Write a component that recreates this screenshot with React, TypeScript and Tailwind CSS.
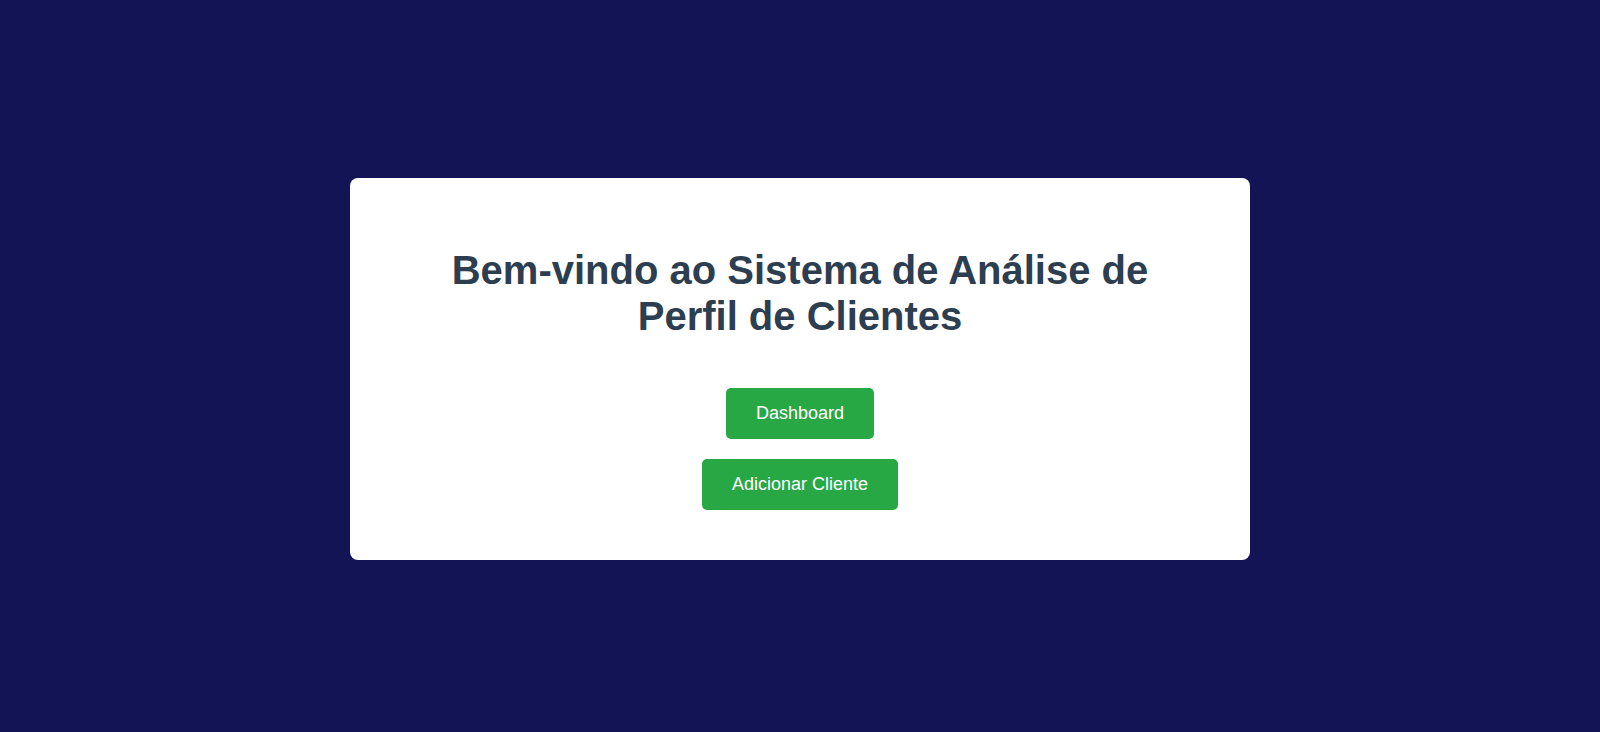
import React from "react";

export default function App() {
  return (
    <div
      className="min-h-screen w-full bg-[#131456] flex items-center justify-center pt-[6px]"
      style={{ fontFamily: '"Liberation Sans", Arial, sans-serif' }}
    >
      <div className="w-[900px] bg-white rounded-[8px] px-[50px] pt-[69px] pb-[50px] flex flex-col items-center">
        <h1 className="text-[40px] leading-[46px] font-bold text-[#2c3e50] text-center max-w-[760px]">
          Bem-vindo ao Sistema de Análise de Perfil de Clientes
        </h1>
        <div className="mt-[49px] flex flex-col items-center gap-[20px]">
          <button className="bg-[#28a745] text-white text-[18px] leading-[21px] px-[30px] py-[15px] rounded-[5px]">
            Dashboard
          </button>
          <button className="bg-[#28a745] text-white text-[18px] leading-[21px] px-[30px] py-[15px] rounded-[5px]">
            Adicionar Cliente
          </button>
        </div>
      </div>
    </div>
  );
}
